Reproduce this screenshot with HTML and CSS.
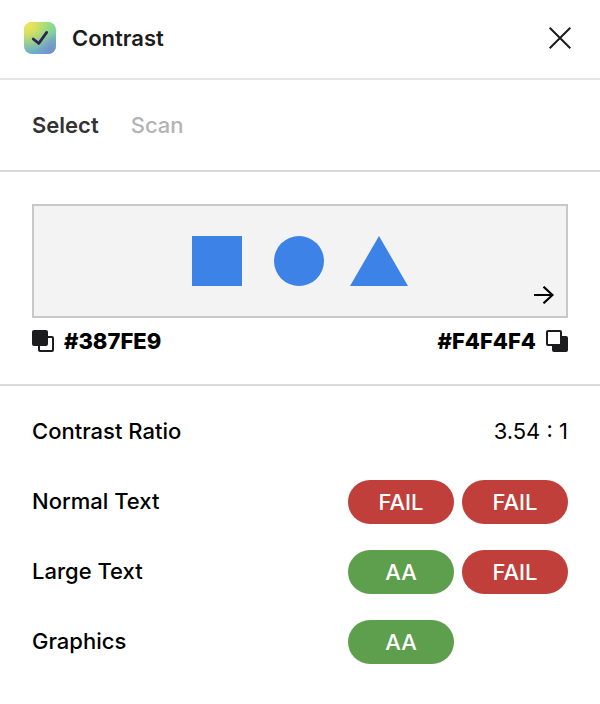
FILE: index.html
```html
<!DOCTYPE html>
<html lang="en">
<head>
<meta charset="utf-8">
<meta name="viewport" content="width=device-width, initial-scale=1">
<title>Contrast</title>
<link rel="stylesheet" href="styles.css">
</head>
<body>
<header class="titlebar">
  <svg class="logo" viewBox="0 0 32 32" aria-hidden="true">
    <defs>
      <linearGradient id="base" x1="0.3" y1="0" x2="0.5" y2="1">
        <stop offset="0" stop-color="#8be08a"/>
        <stop offset="0.35" stop-color="#83d39b"/>
        <stop offset="0.7" stop-color="#74b8bb"/>
        <stop offset="1" stop-color="#6aaad4"/>
      </linearGradient>
      <radialGradient id="yellow" cx="0.1" cy="0.05" r="0.9">
        <stop offset="0" stop-color="#f6e455"/>
        <stop offset="0.35" stop-color="#dfe05c" stop-opacity="0.9"/>
        <stop offset="1" stop-color="#a0dc78" stop-opacity="0"/>
      </radialGradient>
      <radialGradient id="violet" cx="1" cy="1" r="0.65">
        <stop offset="0" stop-color="#7a88c8"/>
        <stop offset="1" stop-color="#7a88c8" stop-opacity="0"/>
      </radialGradient>
    </defs>
    <rect width="32" height="32" rx="8" fill="url(#base)"/>
    <rect width="32" height="32" rx="8" fill="url(#violet)"/>
    <rect width="32" height="32" rx="8" fill="url(#yellow)"/>
    <path d="M9.2 17l5.6 4.4L22.7 10.4" fill="none" stroke="#30214f" stroke-width="2.7" stroke-linecap="round" stroke-linejoin="round"/>
  </svg>
  <h1 class="title">Contrast</h1>
  <button class="close" type="button" aria-label="Close">
    <svg viewBox="0 0 24 24" width="24" height="24" aria-hidden="true"><path d="M1.7 1.7l20.6 20.6M22.3 1.7L1.7 22.3" stroke="#1c1c1c" stroke-width="2"/></svg>
  </button>
</header>
<nav class="tabs">
  <button class="tab tab-active" type="button">Select</button>
  <button class="tab" type="button">Scan</button>
</nav>
<main>
  <section class="colors">
    <div class="preview">
      <svg width="216" height="50" viewBox="0 0 216 50" fill="#3c82e7" aria-hidden="true">
        <rect width="50" height="50"/>
        <circle cx="107" cy="25" r="25"/>
        <path d="M187 0l29 50h-58z"/>
      </svg>
      <button class="next" type="button" aria-label="Next">
        <svg width="20" height="18" viewBox="0 0 20 18" aria-hidden="true"><path d="M0 9h18.5M9.5 .7L18.5 9l-9 8.3" fill="none" stroke="#000" stroke-width="2.2"/></svg>
      </button>
    </div>
    <div class="values">
      <button class="value" type="button">
        <svg width="22" height="22" viewBox="0 0 22 22" aria-hidden="true">
          <rect x="7" y="7" width="14" height="14" rx="1" fill="#fff" stroke="#1c1c1e" stroke-width="2"/>
          <rect width="16" height="16" rx="2" fill="#1c1c1e"/>
        </svg>
        <span>#387FE9</span>
      </button>
      <button class="value" type="button">
        <span>#F4F4F4</span>
        <svg width="22" height="22" viewBox="0 0 22 22" aria-hidden="true">
          <rect x="6" y="6" width="16" height="16" rx="2" fill="#1c1c1e"/>
          <rect x="1" y="1" width="14" height="14" rx="1" fill="#fff" stroke="#1c1c1e" stroke-width="2"/>
        </svg>
      </button>
    </div>
  </section>
  <dl class="results">
    <div class="row"><dt>Contrast Ratio</dt><dd class="ratio">3.54 : 1</dd></div>
    <div class="row"><dt>Normal Text</dt><dd class="grades"><span class="pill fail">FAIL</span><span class="pill fail">FAIL</span></dd></div>
    <div class="row"><dt>Large Text</dt><dd class="grades"><span class="pill pass">AA</span><span class="pill fail">FAIL</span></dd></div>
    <div class="row"><dt>Graphics</dt><dd class="grades"><span class="pill pass">AA</span></dd></div>
  </dl>
</main>
</body>
</html>
```
FILE: styles.css
```css
* {
  box-sizing: border-box;
}

body {
  margin: 0;
  background: #fff;
  color: #000;
  font: 500 22px/28px Inter, sans-serif;
}

button {
  padding: 0;
  border: 0;
  background: none;
  color: inherit;
  font: inherit;
  cursor: pointer;
}

svg {
  display: block;
  flex: none;
}

.titlebar {
  display: flex;
  align-items: center;
  gap: 16px;
  padding: 22px 28px 24px 24px;
  border-bottom: 2px solid #e5e5e5;
}

.logo {
  width: 32px;
  height: 32px;
}

.title {
  margin: 0;
  color: #1c1c1c;
  font-size: 22px;
  font-weight: 600;
}

.close {
  margin-left: auto;
}

.tabs {
  display: flex;
  gap: 32px;
  padding: 31px 32px;
  border-bottom: 2px solid #d9d9d9;
}

.tab {
  color: #b3b3b3;
  font-weight: 500;
}

.tab-active {
  color: #333;
  font-weight: 600;
}

.colors {
  padding: 32px 32px 29px;
  border-bottom: 2px solid #d9d9d9;
}

.preview {
  position: relative;
  display: flex;
  justify-content: center;
  padding: 30px 32px;
  border: 2px solid #c8c8c8;
  background: #f3f3f3;
}

.next {
  position: absolute;
  right: 12px;
  bottom: 12px;
}

.values {
  display: flex;
  justify-content: space-between;
  padding-top: 9px;
}

.value {
  display: flex;
  align-items: center;
  gap: 10px;
  font-weight: 800;
}

.results {
  margin: 0;
  padding: 11px 32px;
}

.row {
  display: flex;
  align-items: center;
  justify-content: space-between;
  min-height: 70px;
}

.row dt,
.ratio {
  padding-bottom: 2px;
}

.row dd {
  margin: 0;
}

.ratio {
  font-weight: 400;
}

.grades {
  display: grid;
  grid-template-columns: 106px 106px;
  gap: 8px;
}

.pill {
  padding: 8px 0;
  border-radius: 22px;
  color: #fff;
  text-align: center;
}

.fail {
  background: #c13f3a;
}

.pass {
  background: #5d9f4c;
}
```
